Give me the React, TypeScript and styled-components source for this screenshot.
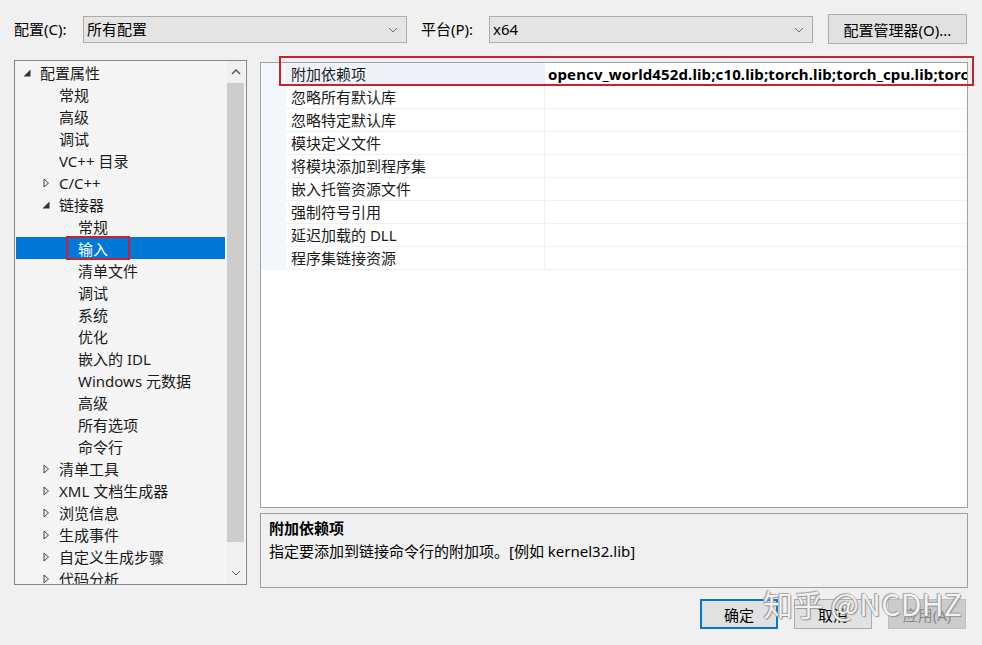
import React from "react";
import styled, { createGlobalStyle } from "styled-components";

const GlobalStyle = createGlobalStyle`
  html, body { margin: 0; padding: 0; background: #f0f0f0; }
  body {
    font-family: "Noto Sans", "Noto Sans CJK SC", sans-serif;
    font-size: 15px;
    color: #000;
  }
  * { box-sizing: border-box; }
`;

const Dialog = styled.div`
  position: relative;
  width: 982px;
  height: 645px;
  overflow: hidden;
  padding: 14px 14px 0 14px;
`;

const TopBar = styled.div`
  display: flex;
  align-items: center;
  height: 30px;
`;

const FieldLabel = styled.span<{ $w: number; $ml?: number }>`
  width: ${(p) => p.$w}px;
  margin-left: ${(p) => p.$ml ?? 0}px;
  line-height: 27px;
  padding-top: 1px;
  white-space: nowrap;
`;

const Combo = styled.div`
  width: 324px;
  height: 27px;
  background: #e5e5e5;
  border: 1px solid #adadad;
  display: flex;
  align-items: center;
  justify-content: space-between;
  padding: 1px 8px 0 3px;
  line-height: 25px;
`;

const PushButton = styled.button<{ $w: number; $ml?: number; $default?: boolean; $disabled?: boolean }>`
  width: ${(p) => p.$w}px;
  height: 30px;
  margin-left: ${(p) => p.$ml ?? 0}px;
  font: inherit;
  font-size: 15px;
  padding: 0;
  color: ${(p) => (p.$disabled ? "#8a8a8a" : "#000")};
  background: ${(p) => (p.$disabled ? "#cccccc" : "#e1e1e1")};
  border: ${(p) => (p.$default ? "2px solid #0078d7" : p.$disabled ? "1px solid #bfbfbf" : "1px solid #adadad")};
`;

const Main = styled.div`
  display: flex;
  align-items: flex-start;
  gap: 13px;
  margin-top: 16px;
`;

const Tree = styled.div`
  width: 233px;
  height: 525px;
  border: 1px solid #828790;
  background: #f5f5f5;
  display: flex;
  overflow: hidden;
`;

const TreeList = styled.div`
  flex: 1;
  padding: 0 2px 0 1px;
  overflow: hidden;
`;

const TreeRow = styled.div<{ $level: number; $selected?: boolean }>`
  height: 22px;
  display: flex;
  align-items: center;
  padding-top: 2px;
  padding-left: ${(p) => 6 + p.$level * 19}px;
  background: ${(p) => (p.$selected ? "#0078d7" : "transparent")};
  color: ${(p) => (p.$selected ? "#fff" : "#1a1a1a")};
  white-space: nowrap;
  line-height: 20px;
`;

const Expander = styled.span`
  width: 10px;
  height: 20px;
  margin-right: 8px;
  display: flex;
  align-items: center;
  justify-content: center;
  flex: none;
`;

const Marked = styled.span`
  position: relative;
  &::after {
    content: "";
    position: absolute;
    left: -12px;
    right: -22px;
    top: -3px;
    bottom: -1px;
    border: 2px solid #c9212e;
  }
`;

const ScrollBar = styled.div`
  width: 18px;
  margin-right: 1px;
  background: #f0f0f0;
  display: flex;
  flex-direction: column;
`;

const ScrollArrow = styled.div`
  height: 22px;
  display: flex;
  align-items: center;
  justify-content: center;
  flex: none;
`;

const Thumb = styled.div`
  height: 459px;
  margin-right: 1px;
  background: #cdcdcd;
  flex: none;
`;

const Spacer = styled.div`
  flex: 1;
`;

const RightCol = styled.div`
  width: 708px;
  margin-top: 2px;
  display: flex;
  flex-direction: column;
  gap: 5px;
`;

const Grid = styled.div`
  position: relative;
  height: 446px;
  border: 1px solid #a0a0a0;
  background: #fff;
`;

const PropRow = styled.div`
  display: grid;
  grid-template-columns: 25px 259px 1fr;
  height: 23px;
`;

const Gutter = styled.div`
  background: #f3f6fa;
`;

const NameCell = styled.div<{ $selected?: boolean }>`
  background: ${(p) => (p.$selected ? "#eef2f8" : "#fff")};
  border-right: 1px solid #f0f0f0;
  border-bottom: 1px solid #f0f0f0;
  padding: 1px 0 0 5px;
  line-height: 21px;
  white-space: nowrap;
  color: #1a1a1a;
`;

const ValueCell = styled.div`
  border-bottom: 1px solid #f0f0f0;
  padding: 1px 0 0 3px;
  line-height: 21px;
  font-weight: 700;
  letter-spacing: 0.12px;
  white-space: nowrap;
  overflow: hidden;
`;

const RowMark = styled.div`
  position: absolute;
  left: 18px;
  top: -7px;
  width: 695px;
  height: 30px;
  border: 2px solid #c9212e;
`;

const Desc = styled.div`
  height: 75px;
  border: 1px solid #a0a0a0;
  background: #f0f0f0;
  padding: 3px 8px;
`;

const DescTitle = styled.div`
  font-weight: 700;
  line-height: 23px;
`;

const DescText = styled.div`
  line-height: 23px;
`;

const Footer = styled.div`
  display: flex;
  justify-content: flex-end;
  gap: 16px;
  margin-top: 11px;
  padding-right: 2px;
`;

const Watermark = styled.div`
  position: absolute;
  left: 763px;
  top: 585px;
  font-family: "Noto Sans CJK SC", "Noto Sans", sans-serif;
  font-size: 30px;
  line-height: 36px;
  color: rgba(255, 255, 255, 0.92);
  text-shadow: 0 0 1px #777, 1px 1px 1px #999, -1px -1px 1px #aaa;
  letter-spacing: 0.3px;
  white-space: nowrap;
  pointer-events: none;
`;

const Chevron = ({ dir = "down" }: { dir?: "down" | "up" }) => (
  <svg width="10" height="6" viewBox="0 0 10 6">
    <polyline
      points={dir === "down" ? "1,1 5,5 9,1" : "1,5 5,1 9,5"}
      fill="none"
      stroke="#606060"
      strokeWidth={dir === "down" ? 1 : 1.6}
    />
  </svg>
);

const ComboChevron = () => (
  <svg width="10" height="6" viewBox="0 0 10 6">
    <polyline points="1,1 5,5 9,1" fill="none" stroke="#707070" strokeWidth="1" />
  </svg>
);

const ExpandedGlyph = () => (
  <svg width="8" height="8" viewBox="0 0 8 8">
    <polygon points="7.5,0.5 7.5,7.5 0.5,7.5" fill="#333" />
  </svg>
);

const CollapsedGlyph = () => (
  <svg width="7" height="10" viewBox="0 0 7 10">
    <polygon points="1,1 5.5,5 1,9" fill="none" stroke="#444" strokeWidth="1" />
  </svg>
);

type Node = { label: string; level: number; exp?: "open" | "closed"; selected?: boolean };

const nodes: Node[] = [
  { label: "配置属性", level: 0, exp: "open" },
  { label: "常规", level: 1 },
  { label: "高级", level: 1 },
  { label: "调试", level: 1 },
  { label: "VC++ 目录", level: 1 },
  { label: "C/C++", level: 1, exp: "closed" },
  { label: "链接器", level: 1, exp: "open" },
  { label: "常规", level: 2 },
  { label: "输入", level: 2, selected: true },
  { label: "清单文件", level: 2 },
  { label: "调试", level: 2 },
  { label: "系统", level: 2 },
  { label: "优化", level: 2 },
  { label: "嵌入的 IDL", level: 2 },
  { label: "Windows 元数据", level: 2 },
  { label: "高级", level: 2 },
  { label: "所有选项", level: 2 },
  { label: "命令行", level: 2 },
  { label: "清单工具", level: 1, exp: "closed" },
  { label: "XML 文档生成器", level: 1, exp: "closed" },
  { label: "浏览信息", level: 1, exp: "closed" },
  { label: "生成事件", level: 1, exp: "closed" },
  { label: "自定义生成步骤", level: 1, exp: "closed" },
  { label: "代码分析", level: 1, exp: "closed" },
];

const props = [
  "附加依赖项",
  "忽略所有默认库",
  "忽略特定默认库",
  "模块定义文件",
  "将模块添加到程序集",
  "嵌入托管资源文件",
  "强制符号引用",
  "延迟加载的 DLL",
  "程序集链接资源",
];

export default function App() {
  return (
    <>
      <GlobalStyle />
      <Dialog>
        <TopBar>
          <FieldLabel $w={69}>配置(C):</FieldLabel>
          <Combo>
            <span>所有配置</span>
            <ComboChevron />
          </Combo>
          <FieldLabel $w={68} $ml={14}>平台(P):</FieldLabel>
          <Combo>
            <span>x64</span>
            <ComboChevron />
          </Combo>
          <PushButton $w={139} $ml={15}>配置管理器(O)...</PushButton>
        </TopBar>

        <Main>
          <Tree>
            <TreeList>
              {nodes.map((n, i) => (
                <TreeRow key={i} $level={n.level} $selected={n.selected}>
                  <Expander>
                    {n.exp === "open" && <ExpandedGlyph />}
                    {n.exp === "closed" && <CollapsedGlyph />}
                  </Expander>
                  {n.selected ? <Marked>{n.label}</Marked> : <span>{n.label}</span>}
                </TreeRow>
              ))}
            </TreeList>
            <ScrollBar>
              <ScrollArrow>
                <Chevron dir="up" />
              </ScrollArrow>
              <Thumb />
              <Spacer />
              <ScrollArrow>
                <Chevron dir="down" />
              </ScrollArrow>
            </ScrollBar>
          </Tree>

          <RightCol>
            <Grid>
              {props.map((p, i) => (
                <PropRow key={p}>
                  <Gutter />
                  <NameCell $selected={i === 0}>{p}</NameCell>
                  <ValueCell>
                    {i === 0 ? "opencv_world452d.lib;c10.lib;torch.lib;torch_cpu.lib;torch_cuda.lib" : ""}
                  </ValueCell>
                </PropRow>
              ))}
              <RowMark />
            </Grid>
            <Desc>
              <DescTitle>附加依赖项</DescTitle>
              <DescText>指定要添加到链接命令行的附加项。[例如 kernel32.lib]</DescText>
            </Desc>
          </RightCol>
        </Main>

        <Footer>
          <PushButton $w={78} $default>确定</PushButton>
          <PushButton $w={78}>取消</PushButton>
          <PushButton $w={78} $disabled>应用(A)</PushButton>
        </Footer>

        <Watermark>知乎 @NCDHZ</Watermark>
      </Dialog>
    </>
  );
}
